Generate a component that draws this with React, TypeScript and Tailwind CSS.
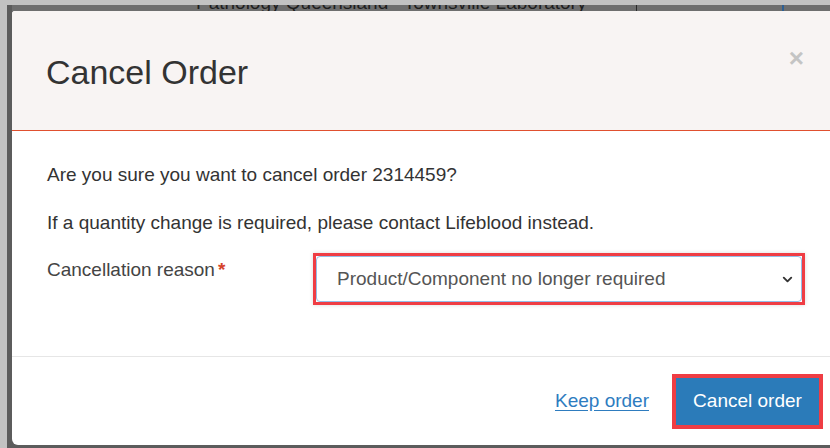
import { ChevronDown } from 'lucide-react';

export default function App() {
    return (
        <div className="w-[830px] h-[448px] overflow-hidden bg-[#c2c2c2] pt-[5px] pl-[7px] font-['Liberation_Sans',Arial,sans-serif]">
            <div className="h-[443px] flex flex-col bg-[#5c5c5c] pl-[5px]">
                {/* page behind the dialog, mostly hidden */}
                <div className="h-[6px] overflow-hidden bg-[#6e6e6e] shrink-0">
                    <div className="flex items-center -mt-[13px] h-[22px] text-[19px] leading-[22px] text-[#1e1e1e]">
                        <span className="ml-[184px] w-[420px] whitespace-nowrap">Pathology Queensland &nbsp; Townsville Laboratory</span>
                        <span className="ml-[20px] w-[1px] h-[22px] bg-[#2a2a2a]"></span>
                        <span className="ml-[145px] w-[2px] h-[22px] bg-[#2d5f93]"></span>
                    </div>
                </div>

                <div className="flex-1 flex flex-col bg-white rounded-tl-[3px] rounded-bl-[6px] overflow-hidden mb-[3px]">
                    <div className="h-[120px] shrink-0 flex justify-between bg-[#f8f4f3] border-b border-[#e0502f] pl-[34px] pr-[26px]">
                        <h1 className="mt-[42px] text-[34px] leading-[38px] text-[#333]">Cancel Order</h1>
                        <button className="mt-[35px] h-[24px] text-[26px] leading-[24px] font-bold text-[#c4c4c4]">×</button>
                    </div>

                    <div className="h-[226px] shrink-0 pt-[30px] pl-[35px] text-[19px] text-[#333] border-b border-[#e6e6e6]">
                        <p className="h-[27px] leading-[27px]">Are you sure you want to cancel order 2314459?</p>
                        <p className="mt-[21px] h-[27px] leading-[27px]">If a quantity change is required, please contact Lifeblood instead.</p>
                        <div className="mt-[17px] flex">
                            <label className="w-[266px] pt-[3px] leading-[27px] text-[#444]">
                                Cancellation reason<span className="ml-[3px] font-bold text-[#d5432b]">*</span>
                            </label>
                            <div className="w-[492px] h-[52px] border-[3px] border-[#ef3d44] shadow-[0_0_4px_rgba(0,0,0,0.15)]">
                                <div className="h-full flex items-center justify-between bg-white border border-[#93bfe9] rounded-[4px] pl-[20px] pr-[6px]">
                                    <span className="text-[19px] text-[#555]">Product/Component no longer required</span>
                                    <ChevronDown size={15} strokeWidth={3} className="text-[#333]" />
                                </div>
                            </div>
                        </div>
                    </div>

                    <div className="flex-1 flex items-start justify-end pt-[17px] pr-[7px]">
                        <a href="#" className="mt-[16px] mr-[23px] text-[19px] leading-[22px] text-[#2e7cbf] underline underline-offset-[3px]">Keep order</a>
                        <div className="border-[4px] border-[#ef3d44]">
                            <button className="w-[143px] h-[47px] bg-[#2b7bb9] text-white text-[19px]">Cancel order</button>
                        </div>
                    </div>
                </div>
            </div>
        </div>
    )
}
